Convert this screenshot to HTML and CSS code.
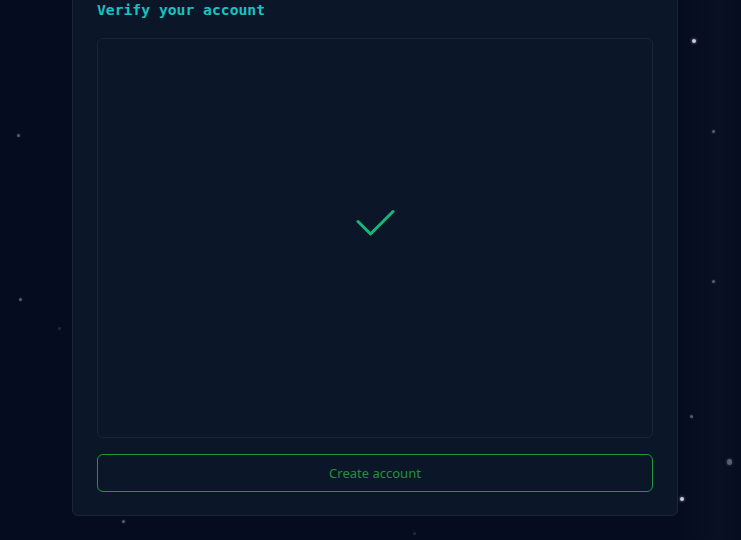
FILE: index.html
```html
<!DOCTYPE html>
<html lang="en">
<head>
<meta charset="utf-8">
<title>Verify your account</title>
<link rel="stylesheet" href="styles.css">
</head>
<body>
<div class="sky" aria-hidden="true">
  <span class="star s-bright" style="left:694px;top:41px"></span>
  <span class="star" style="left:18px;top:135px"></span>
  <span class="star" style="left:713px;top:131px"></span>
  <span class="star" style="left:20px;top:299px"></span>
  <span class="star s-faint" style="left:59px;top:328px"></span>
  <span class="star" style="left:713px;top:281px"></span>
  <span class="star" style="left:691px;top:416px"></span>
  <span class="star s-blur" style="left:729px;top:462px"></span>
  <span class="star s-bright" style="left:682px;top:499px"></span>
  <span class="star" style="left:123px;top:521px"></span>
  <span class="star s-faint" style="left:414px;top:533px"></span>
</div>
<main class="page">
  <section class="card">
    <h2 class="title">Verify your account</h2>
    <div class="captcha">
      <svg class="check" width="40" height="30" viewBox="0 0 40 30">
        <path d="M2 12.5 L14.5 25 L37 2.5" fill="none" stroke="#13b97a" stroke-width="3" stroke-linecap="round" stroke-linejoin="round"/>
      </svg>
    </div>
    <button class="btn" type="button">Create account</button>
  </section>
</main>
</body>
</html>
```

FILE: styles.css
```css
html, body {
  margin: 0;
  padding: 0;
  height: 100%;
  overflow: hidden;
}

body {
  background: #050c1f;
  background-image: linear-gradient(90deg, rgba(0,0,0,0) 0%, rgba(0,0,0,0) 92%, rgba(14,20,40,0.55) 97%, rgba(0,0,0,0) 100%);
  font-family: "Noto Sans", "DejaVu Sans", sans-serif;
  position: relative;
}

.sky {
  position: absolute;
  inset: 0;
  pointer-events: none;
}

.star {
  position: absolute;
  width: 3px;
  height: 3px;
  margin: -1.5px 0 0 -1.5px;
  border-radius: 50%;
  background: rgba(150, 160, 180, 0.55);
  box-shadow: 0 0 2px rgba(150, 160, 180, 0.4);
}

.s-bright {
  width: 4px;
  height: 4px;
  margin: -2px 0 0 -2px;
  background: rgba(225, 228, 235, 0.9);
  box-shadow: 0 0 3px rgba(220, 225, 235, 0.7);
}

.s-faint {
  background: rgba(120, 130, 150, 0.25);
  box-shadow: none;
}

.s-blur {
  width: 5px;
  height: 6px;
  margin: -3px 0 0 -2.5px;
  background: rgba(170, 175, 190, 0.5);
  box-shadow: 0 0 3px rgba(170, 175, 190, 0.4);
}

.page {
  position: relative;
  display: flex;
  padding-left: 72px;
}

.card {
  width: 606px;
  box-sizing: border-box;
  margin-top: -25px;
  padding: 24px 24px 23px;
  background: #0c1629;
  border: 1px solid #1b2537;
  border-radius: 6px;
  display: flex;
  flex-direction: column;
}

.title {
  margin: 0 0 18px;
  font-family: "DejaVu Sans Mono", "Liberation Mono", monospace;
  font-weight: bold;
  font-size: 14.7px;
  line-height: 20px;
  color: #16c3c1;
}

.captcha {
  height: 400px;
  box-sizing: border-box;
  border: 1px solid #1a2435;
  border-radius: 6px;
  display: flex;
  align-items: center;
  justify-content: center;
}

.check {
  display: block;
  margin: -28px 0 0 2px;
}

.btn {
  margin-top: 16px;
  height: 38px;
  width: 100%;
  box-sizing: border-box;
  background: transparent;
  border: 1px solid #1e9a3a;
  border-radius: 6px;
  color: #23913a;
  font-family: "Noto Sans", "DejaVu Sans", sans-serif;
  font-size: 13px;
  cursor: pointer;
  padding: 0;
}
```
